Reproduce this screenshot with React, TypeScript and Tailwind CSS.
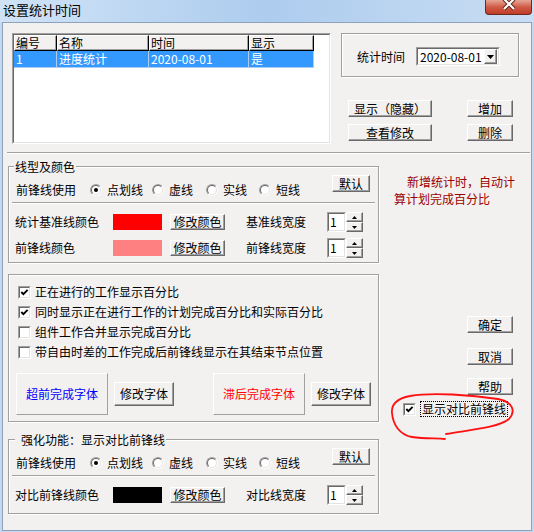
import React from "react";

const btn =
  "flex items-center justify-center bg-[#f3f0f0] border border-t-white border-l-white border-r-[#696969] border-b-[#696969] shadow-[inset_-1px_-1px_0_#a0a0a0]";
const etched = "border border-[#a0a0a0] shadow-[inset_1px_1px_0_#fff,1px_1px_0_#fff]";
const sunkOuter = "border border-t-[#a0a0a0] border-l-[#a0a0a0] border-r-white border-b-white";
const sunkInner =
  "border border-t-[#696969] border-l-[#696969] border-r-[#e3e3e3] border-b-[#e3e3e3] bg-white";

function Radio({ checked }: { checked?: boolean }) {
  return (
    <div className={"w-[12px] h-[12px] rounded-full shrink-0 " + sunkOuter}>
      <div className={"w-full h-full rounded-full flex items-center justify-center " + sunkInner}>
        {checked && <div className="w-[4px] h-[4px] rounded-full bg-black" />}
      </div>
    </div>
  );
}

function Check({ checked }: { checked?: boolean }) {
  return (
    <div className={"w-[13px] h-[13px] shrink-0 " + sunkOuter}>
      <div className={"w-full h-full " + sunkInner}>
        {checked && (
          <svg width="9" height="9" viewBox="0 0 9 9" className="block">
            <path d="M1.3 4 L3.4 6.2 L7.6 1.8" fill="none" stroke="#000" strokeWidth="1.9" />
          </svg>
        )}
      </div>
    </div>
  );
}

function Spin() {
  return (
    <div className="flex">
      <div className={"w-[19px] h-[20px] " + sunkOuter}>
        <div className={"w-full h-full pl-[1px] flex items-center " + sunkInner}>1</div>
      </div>
      <div className="flex flex-col w-[17px] h-[20px]">
        <div className={btn + " h-[10px]"}>
          <svg width="5" height="3" viewBox="0 0 5 3" className="block">
            <path d="M2.5 0 L5 3 L0 3Z" fill="#000" />
          </svg>
        </div>
        <div className={btn + " h-[10px]"}>
          <svg width="5" height="3" viewBox="0 0 5 3" className="block">
            <path d="M0 0 L5 0 L2.5 3Z" fill="#000" />
          </svg>
        </div>
      </div>
    </div>
  );
}

function LineRow() {
  return (
    <div className="h-[35px] flex items-start pt-[8px]">
      <div className="flex items-center mt-[9px] pl-[7px]">
        <span className="w-[74px]">前锋线使用</span>
        <div className="w-[62px] flex items-center">
          <Radio checked />
          <span className="ml-[5px]">点划线</span>
        </div>
        <div className="w-[54px] flex items-center">
          <Radio />
          <span className="ml-[5px]">虚线</span>
        </div>
        <div className="w-[53px] flex items-center">
          <Radio />
          <span className="ml-[5px]">实线</span>
        </div>
        <div className="flex items-center">
          <Radio />
          <span className="ml-[5px]">短线</span>
        </div>
      </div>
      <div className={btn + " ml-auto mr-[8px] w-[38px] h-[17px]"}>默认</div>
    </div>
  );
}

function Sep() {
  return <div className="mx-[3px] h-[2px] border-t border-b border-t-[#a0a0a0] border-b-white" />;
}

function ColorRow({
  label,
  swatch,
  wlabel,
  top,
}: {
  label: string;
  swatch: string;
  wlabel: string;
  top: string;
}) {
  return (
    <div className={"flex items-center h-[20px] pl-[6px] " + top}>
      <span className="w-[98px]">{label}</span>
      <div className={"w-[49px] h-[16px] " + swatch} />
      <div className={btn + " ml-[8px] w-[55px] h-[16px]"}>修改颜色</div>
      <span className="ml-[21px] w-[81px]">{wlabel}</span>
      <Spin />
    </div>
  );
}

export default function App() {
  const headCell =
    "h-full bg-[#f3f0f0] border border-t-white border-l-white border-r-black border-b-black shadow-[inset_-1px_-1px_0_#a0a0a0] pl-[1px] flex items-center";
  const rowCell = "h-full flex items-center pl-[2px] border-r border-b border-[#a9cdf3]";
  return (
    <div className="relative w-[534px] h-[532px] overflow-hidden bg-[#c4d9f0] flex flex-col font-['Noto_Sans_CJK_SC',sans-serif] text-[12px] leading-[12px] text-black">
      {/* title bar */}
      <div className="h-[22px] shrink-0 flex items-start bg-linear-to-r from-[#d0e3f6] via-[#adccee] to-[#c9ddf3]">
        <span className="pl-[3px] pt-[3px] text-[13px] leading-[13px]">设置统计时间</span>
        <div className="ml-auto mr-[2px] w-[47px] h-[15px] rounded-b-[4px] border border-t-0 border-[#6b2a20] bg-linear-to-b from-[#e6a595] via-[#cf5b47] to-[#c03b25] flex justify-center">
          <svg width="16" height="11" viewBox="0 0 16 11" className="block">
            <path d="M3 -1 L13 9 M13 -1 L3 9" stroke="#5a2218" strokeWidth="4" />
            <path d="M3 -1 L13 9 M13 -1 L3 9" stroke="#ffffff" strokeWidth="2.2" />
          </svg>
        </div>
      </div>

      {/* client */}
      <div className="mx-[2px] h-[509px] shrink-0 border border-[#8da2bb] bg-[#f3f0f0] flex flex-col">
        {/* top section */}
        <div className="flex pt-[10px] pl-[9px]">
          <div className={"w-[319px] h-[111px] " + sunkOuter}>
            <div className={"w-full h-full " + sunkInner}>
              <div className="flex h-[16px]">
                <div className={headCell + " w-[43px]"}>编号</div>
                <div className={headCell + " w-[92px]"}>名称</div>
                <div className={headCell + " w-[100px]"}>时间</div>
                <div className={headCell + " w-[65px]"}>显示</div>
              </div>
              <div className="flex h-[17px] text-white">
                <div className={rowCell + " w-[43px] bg-[#3399ff]"}>1</div>
                <div className={rowCell + " w-[92px] bg-[#3399ff]"}>进度统计</div>
                <div className={rowCell + " w-[100px] bg-[#3399ff]"}>2020-08-01</div>
                <div className={rowCell + " w-[65px] bg-[#3399ff]"}>是</div>
              </div>
            </div>
          </div>

          <div className="ml-[10px] w-[178px] flex flex-col">
            <div className={"h-[44px] flex items-center pl-[15px] pt-[3px] " + etched}>
              <span className="w-[48px]">统计时间</span>
              <div className={"ml-[11px] w-[84px] h-[19px] " + sunkOuter}>
                <div className={"w-full h-full flex items-center " + sunkInner}>
                  <span className="pl-[2px]">2020-08-01</span>
                  <div className={btn + " ml-auto mr-[1px] w-[13px] h-[15px]"}>
                    <svg width="7" height="4" viewBox="0 0 7 4" className="block">
                      <path d="M0 0 L7 0 L3.5 4Z" fill="#000" />
                    </svg>
                  </div>
                </div>
              </div>
            </div>
            <div className="flex mt-[23px]">
              <div className={btn + " ml-[7px] w-[84px] h-[17px]"}>显示（隐藏）</div>
              <div className={btn + " ml-[35px] w-[46px] h-[17px]"}>增加</div>
            </div>
            <div className="flex mt-[7px]">
              <div className={btn + " ml-[7px] w-[84px] h-[17px]"}>查看修改</div>
              <div className={btn + " ml-[35px] w-[46px] h-[17px]"}>删除</div>
            </div>
          </div>
        </div>

        <div className="mt-[8px] ml-[4px] w-[523px] h-[2px] border-t border-b border-t-[#a0a0a0] border-b-white" />

        {/* lower section */}
        <div className="flex items-start">
          <div className="ml-[5px] w-[371px] flex flex-col">
            {/* group 1 */}
            <div className={"relative w-[371px] h-[97px] mt-[12px] " + etched}>
              <span className="absolute left-[5px] top-[-6px] px-[1px] bg-[#f3f0f0]">线型及颜色</span>
              <LineRow />
              <Sep />
              <ColorRow label="统计基准线颜色" swatch="bg-[#ff0000]" wlabel="基准线宽度" top="mt-[8px]" />
              <ColorRow label="前锋线颜色" swatch="bg-[#ff8080]" wlabel="前锋线宽度" top="mt-[6px]" />
            </div>

            {/* group 2 */}
            <div className={"w-[371px] h-[148px] mt-[11px] pt-[7px] " + etched}>
              <div className="h-[20px] flex items-center pl-[9px]">
                <Check checked />
                <span className="ml-[4px]">正在进行的工作显示百分比</span>
              </div>
              <div className="h-[20px] flex items-center pl-[9px]">
                <Check checked />
                <span className="ml-[4px]">同时显示正在进行工作的计划完成百分比和实际百分比</span>
              </div>
              <div className="h-[20px] flex items-center pl-[9px]">
                <Check />
                <span className="ml-[4px]">组件工作合并显示完成百分比</span>
              </div>
              <div className="h-[20px] flex items-center pl-[9px]">
                <Check />
                <span className="ml-[4px]">带自由时差的工作完成后前锋线显示在其结束节点位置</span>
              </div>
              <div className="flex items-center mt-[11px] pl-[7px]">
                <div className="w-[92px] h-[42px] flex items-center justify-center border border-t-white border-l-white border-r-[#a0a0a0] border-b-[#a0a0a0] text-[#0000ff]">
                  超前完成字体
                </div>
                <div className={btn + " ml-[6px] w-[60px] h-[24px]"}>修改字体</div>
                <div className="ml-[39px] w-[92px] h-[42px] flex items-center justify-center border border-t-white border-l-white border-r-[#a0a0a0] border-b-[#a0a0a0] text-[#ff0000]">
                  滞后完成字体
                </div>
                <div className={btn + " ml-[6px] w-[60px] h-[24px]"}>修改字体</div>
              </div>
            </div>

            {/* group 3 */}
            <div className={"relative w-[371px] h-[75px] mt-[17px] " + etched}>
              <span className="absolute left-[6px] top-[-6px] pl-[6px] pr-[1px] bg-[#f3f0f0]">
                强化功能：显示对比前锋线
              </span>
              <LineRow />
              <Sep />
              <ColorRow label="对比前锋线颜色" swatch="bg-black" wlabel="对比线宽度" top="mt-[8px]" />
            </div>
          </div>

          {/* right column */}
          <div className="ml-[15px] flex flex-col">
            <div className="mt-[19px] h-[34px] text-[#990000] leading-[17px]">
              <div className="pl-[13px]">新增统计时，自动计</div>
              <div>算计划完成百分比</div>
            </div>
            <div className={btn + " ml-[73px] mt-[109px] w-[46px] h-[17px]"}>确定</div>
            <div className={btn + " ml-[73px] mt-[15px] w-[46px] h-[17px]"}>取消</div>
            <div className={btn + " ml-[73px] mt-[13px] w-[46px] h-[17px]"}>帮助</div>
            <div className="flex items-center mt-[6px] ml-[9px] h-[16px]">
              <Check checked />
              <div className="ml-[4px] h-[16px] px-[1px] flex items-center border border-dotted border-black">
                显示对比前锋线
              </div>
            </div>
          </div>
        </div>
      </div>

      {/* hand-drawn annotation */}
      <svg
        className="absolute left-0 top-0 pointer-events-none"
        width="534"
        height="532"
        viewBox="0 0 534 532"
      >
        <path
          d="M446 434 C468 430 498 428 509 419 C516 411 513 402 498 399 C472 395 432 392 410 396 C397 398 391 405 392 413 C393 425 400 435 412 437 C425 439 437 438 445 439"
          fill="none"
          stroke="#ff1010"
          strokeWidth="1.8"
          strokeLinecap="round"
        />
      </svg>
    </div>
  );
}
